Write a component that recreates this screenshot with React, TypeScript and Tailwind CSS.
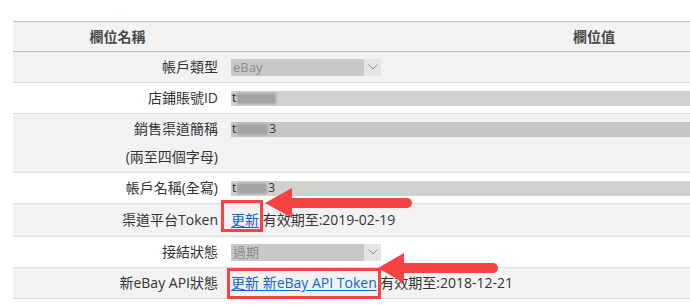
import React from 'react'

type Row = {
  label: string[]
  bg: string
  tall?: boolean
  value: React.ReactNode
}

function Select({ text }: { text: string }) {
  return (
    <div className="flex h-[17px] w-[150px] items-stretch">
      <div className="flex flex-1 items-center bg-[#c8c8c8] pl-[2px] text-[13px] leading-none text-[#8a8a8a]">
        {text}
      </div>
      <div className="flex w-[17px] items-center justify-center bg-[#e4e4e4]">
        <svg width="10" height="6" viewBox="0 0 10 6">
          <path d="M0.5 0.5 L5 5 L9.5 0.5" fill="none" stroke="#8c8c8c" strokeWidth="1" />
        </svg>
      </div>
    </div>
  )
}

// 遮罩過的輸入框
function MaskedInput({ dark, tail, blurWidth }: { dark?: boolean; tail?: boolean; blurWidth: number }) {
  return (
    <div
      className={`flex h-[15px] w-[640px] items-center text-[12px] leading-none text-[#222] ${
        dark ? 'bg-[#c6c6c1]' : 'bg-[#d0d0cc]'
      }`}
    >
      <span className="pl-[1px]">t</span>
      <div
        className="ml-[1px] h-[11px] bg-[#a4a4a2] blur-[1px]"
        style={{ width: blurWidth }}
      />
      {tail && <span className="ml-[1px] text-[#333]">3</span>}
    </div>
  )
}

function Link({ children }: { children: React.ReactNode }) {
  return <a className="cursor-pointer text-[#0b66d4] underline underline-offset-2">{children}</a>
}

const rows: Row[] = [
  { label: ['帳戶類型'], bg: 'bg-[#f2f2f2]', value: <Select text="eBay" /> },
  { label: ['店鋪賬號ID'], bg: 'bg-white', value: <MaskedInput blurWidth={39} /> },
  {
    label: ['銷售渠道簡稱', '(兩至四個字母)'],
    bg: 'bg-[#f2f2f2]',
    value: <MaskedInput dark tail blurWidth={31} />,
  },
  { label: ['帳戶名稱(全寫)'], bg: 'bg-white', value: <MaskedInput tail blurWidth={30} /> },
  {
    label: ['渠道平台Token'],
    bg: 'bg-[#f2f2f2]',
    tall: true,
    value: (
      <span>
        <Link>更新</Link> 有效期至:2019-02-19
      </span>
    ),
  },
  { label: ['接結狀態'], bg: 'bg-white', value: <Select text="過期" /> },
  {
    label: ['新eBay API狀態'],
    bg: 'bg-[#f2f2f2]',
    value: (
      <span>
        <Link>更新 新eBay API Token</Link> 有效期至:2018-12-21
      </span>
    ),
  },
]

export default function App() {
  return (
    <div className="relative h-[305px] w-[690px] overflow-hidden bg-white font-['Open_Sans','Noto_Sans_CJK_TC',sans-serif] text-[14px] text-[#333]">
      <div className="ml-[13px] mt-[21px] w-[953px]">
        {/* 表頭 */}
        <div className="grid grid-cols-[209px_744px] border-y border-[#bdbdbd] bg-[#f2f2f2] font-bold leading-[29px] text-[#4a4a4a]">
          <div className="text-center">欄位名稱</div>
          <div className="text-center">欄位值</div>
        </div>

        {rows.map((row, i) => (
          <div
            key={i}
            className={`grid grid-cols-[209px_744px] border-b border-[#dedede] ${row.bg} ${
              row.tall ? 'py-[2px]' : 'py-[1px]'
            }`}
          >
            <div className="pr-[4px] text-right leading-[28px]">
              {row.label.map(l => (
                <div key={l}>{l}</div>
              ))}
            </div>
            <div className="flex h-[28px] items-center pl-[9px] leading-[28px]">{row.value}</div>
          </div>
        ))}
      </div>

      {/* 紅框與箭頭標註 */}
      <svg className="pointer-events-none absolute left-0 top-0" width="690" height="305" viewBox="0 0 690 305">
        <rect x="222.5" y="201.5" width="39" height="29" fill="none" stroke="#f84343" strokeWidth="3" />
        <rect x="228.5" y="269.5" width="151" height="28" fill="none" stroke="#f84343" strokeWidth="3" />

        <polygon points="265,203 292,188 292,218" fill="#f84343" />
        <line x1="290" y1="203" x2="407" y2="203" stroke="#f84343" strokeWidth="10" strokeLinecap="round" />

        <polygon points="378,268 404,253 404,283" fill="#f84343" />
        <line x1="402" y1="268" x2="493" y2="268" stroke="#f84343" strokeWidth="10" strokeLinecap="round" />
      </svg>
    </div>
  )
}
